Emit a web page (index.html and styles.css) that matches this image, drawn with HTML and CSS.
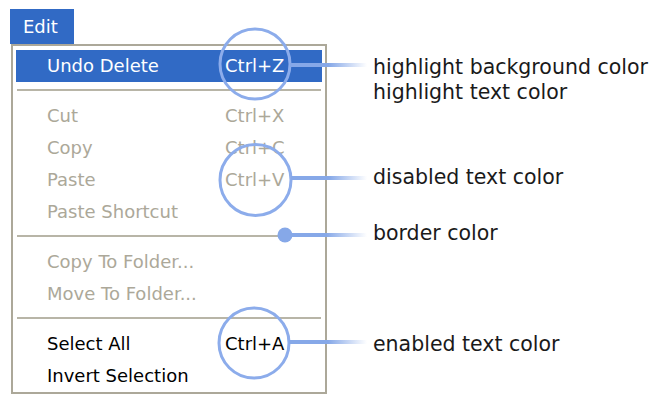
FILE: index.html
```html
<!DOCTYPE html>
<html lang="en">
<head>
    <meta charset="UTF-8">
    <meta name="viewport" content="width=device-width, initial-scale=1.0">
    <title>Menu Colors</title>
    <link rel="stylesheet" href="styles.css">
</head>
<body>
    <div class="page">
        <!-- The menu itself -->
        <div class="menu-area">
            <div class="tab">Edit</div>
            <div class="menu">
                <div class="item active"><span class="name">Undo Delete</span><span>Ctrl+Z</span></div>
                <div class="sep"></div>
                <div class="item disabled"><span class="name">Cut</span><span>Ctrl+X</span></div>
                <div class="item disabled"><span class="name">Copy</span><span>Ctrl+C</span></div>
                <div class="item disabled"><span class="name">Paste</span><span>Ctrl+V</span></div>
                <div class="item disabled"><span class="name">Paste Shortcut</span></div>
                <div class="sep"></div>
                <div class="item disabled"><span class="name">Copy To Folder...</span></div>
                <div class="item disabled"><span class="name">Move To Folder...</span></div>
                <div class="sep"></div>
                <div class="item"><span class="name">Select All</span><span>Ctrl+A</span></div>
                <div class="item"><span class="name">Invert Selection</span></div>
            </div>
        </div>

        <!-- Labels on the right -->
        <div class="notes">
            <p class="note">highlight background color</p>
            <p class="note">highlight text color</p>
            <p class="note note-disabled">disabled text color</p>
            <p class="note note-border">border color</p>
            <p class="note note-enabled">enabled text color</p>
        </div>

        <!-- Callout circles and lines drawn over the menu -->
        <svg class="callouts" width="658" height="396" viewBox="0 0 658 396">
            <defs>
                <linearGradient id="fade" x1="0" y1="0" x2="1" y2="0">
                    <stop offset="0" stop-color="#86a8e8"/>
                    <stop offset="0.5" stop-color="#86a8e8"/>
                    <stop offset="1" stop-color="#86a8e8" stop-opacity="0"/>
                </linearGradient>
            </defs>
            <circle cx="255" cy="64" r="35" fill="none" stroke="#8caceb" stroke-width="3"/>
            <rect x="290" y="63" width="77" height="4" fill="url(#fade)"/>

            <circle cx="255.5" cy="180" r="35.5" fill="none" stroke="#8caceb" stroke-width="3"/>
            <rect x="291" y="176" width="76" height="4" fill="url(#fade)"/>

            <circle cx="285" cy="235" r="7.5" fill="#86a8e8"/>
            <rect x="285" y="233" width="82" height="4" fill="url(#fade)"/>

            <circle cx="254" cy="343" r="35" fill="none" stroke="#8caceb" stroke-width="3"/>
            <rect x="289" y="340" width="78" height="4" fill="url(#fade)"/>
        </svg>
    </div>
</body>
</html>
```

FILE: styles.css
```css
body {
    margin: 0;
    background-color: #fff;
    font-family: "DejaVu Sans", Verdana, sans-serif;
}

.page {
    position: relative;
    display: flex;
    height: 396px;
    padding: 9px 0 0 10px;
    box-sizing: border-box;
    overflow: hidden;
}

.menu-area {
    width: 317px;
}

.tab {
    width: 64px;
    height: 35px;
    padding-left: 13px;
    box-sizing: border-box;
    background-color: #316ac5;
    color: #fff;
    font-size: 18px;
    line-height: 35px;
}

.menu {
    width: 316px;
    margin-left: 1px;
    padding: 4px 3px 0;
    border: 2px solid #aca899;
    box-sizing: border-box;
}

.item {
    display: flex;
    height: 32px;
    padding-left: 31px;
    font-size: 18px;
    line-height: 32px;
    color: #000;
    white-space: nowrap;
}

.item .name {
    width: 178px;
}

.item.active {
    background-color: #316ac5;
    color: #fff;
}

.item.disabled {
    color: #aca899;
}

.sep {
    height: 2px;
    margin: 7px 1px 9px;
    background-color: #b8b5a7;
}

.notes {
    margin-left: 46px;
    padding-top: 46px;
}

.note {
    margin: 0;
    font-size: 20.5px;
    line-height: 25px;
    color: #1a1a1a;
    white-space: nowrap;
}

.note-disabled {
    margin-top: 60px;
}

.note-border {
    margin-top: 31px;
}

.note-enabled {
    margin-top: 86px;
}

.callouts {
    position: absolute;
    top: 0;
    left: 0;
}
```
